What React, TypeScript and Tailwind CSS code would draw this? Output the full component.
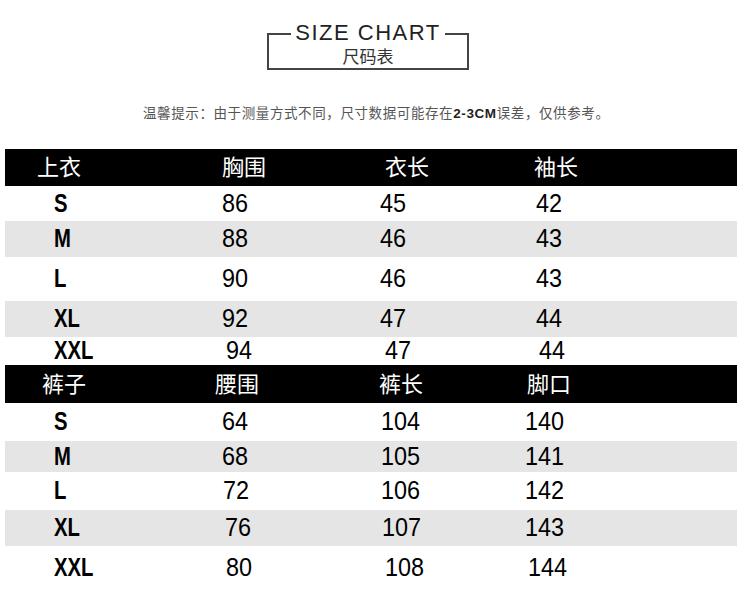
type Row = {
  cells: string[];
  pads: string[];
  h: string;
  bg: string;
};

const cols = ['w-[210px]', 'w-[160px]', 'w-[150px]', 'flex-1'];

const topRows: Row[] = [
  { cells: ['S', '86', '45', '42'], pads: ['pl-[49px]', 'pl-[7px]', 'pl-[5px]', 'pl-[11px]'], h: 'h-[35px]', bg: 'bg-white' },
  { cells: ['M', '88', '46', '43'], pads: ['pl-[49px]', 'pl-[7px]', 'pl-[5px]', 'pl-[11px]'], h: 'h-[36px]', bg: 'bg-[#e5e5e5]' },
  { cells: ['L', '90', '46', '43'], pads: ['pl-[49px]', 'pl-[7px]', 'pl-[5px]', 'pl-[11px]'], h: 'h-[44px]', bg: 'bg-white' },
  { cells: ['XL', '92', '47', '44'], pads: ['pl-[49px]', 'pl-[7px]', 'pl-[5px]', 'pl-[11px]'], h: 'h-[36px]', bg: 'bg-[#e5e5e5]' },
  { cells: ['XXL', '94', '47', '44'], pads: ['pl-[49px]', 'pl-[11px]', 'pl-[10px]', 'pl-[14px]'], h: 'h-[28px]', bg: 'bg-white' },
];

const bottomRows: Row[] = [
  { cells: ['S', '64', '104', '140'], pads: ['pl-[49px]', 'pl-[7px]', 'pl-[6px]', 'pl-0'], h: 'h-[38px]', bg: 'bg-white' },
  { cells: ['M', '68', '105', '141'], pads: ['pl-[49px]', 'pl-[7px]', 'pl-[6px]', 'pl-0'], h: 'h-[31px]', bg: 'bg-[#e5e5e5]' },
  { cells: ['L', '72', '106', '142'], pads: ['pl-[49px]', 'pl-[8px]', 'pl-[6px]', 'pl-0'], h: 'h-[38px]', bg: 'bg-white' },
  { cells: ['XL', '76', '107', '143'], pads: ['pl-[49px]', 'pl-[10px]', 'pl-[7px]', 'pl-0'], h: 'h-[36px]', bg: 'bg-[#e5e5e5]' },
  { cells: ['XXL', '80', '108', '144'], pads: ['pl-[49px]', 'pl-[11px]', 'pl-[10px]', 'pl-[3px]'], h: 'h-[44px]', bg: 'bg-white' },
];

function Header({ cells, pads, h }: { cells: string[]; pads: string[]; h: string }) {
  return (
    <div className={`flex items-center bg-black text-white text-[22px] pb-[5px] ${h}`} style={{ fontFamily: '"Noto Sans CJK SC", sans-serif' }}>
      {cells.map((c, i) => (
        <div key={c} className={`${cols[i]} ${pads[i]} leading-none`}>{c}</div>
      ))}
    </div>
  );
}

function DataRow({ row }: { row: Row }) {
  return (
    <div className={`flex items-center text-black pb-[2px] ${row.h} ${row.bg}`}>
      {row.cells.map((c, i) => (
        <div key={i} className={`${cols[i]} ${row.pads[i]} text-[26px] leading-none`}>
          {i === 0 ? (
            <span className="inline-block font-bold scale-x-[0.78] origin-left">{c}</span>
          ) : (
            <span className="inline-block scale-x-[0.9] origin-left">{c}</span>
          )}
        </div>
      ))}
    </div>
  );
}

export default function App() {
  return (
    <div className="w-[750px] h-[595px] bg-white overflow-hidden pt-[22px]" style={{ fontFamily: '"Liberation Sans", "Noto Sans CJK SC", sans-serif' }}>
      {/* title */}
      <div className="ml-[267px] w-[202px] flex flex-col text-[#333]">
        <div className="flex items-end h-[22px]">
          <div className="w-[24px] h-[11px] border-l-2 border-t-2 border-[#444]" />
          <div className="flex-1 text-center text-[22px] leading-[22px] tracking-[1.5px] self-center text-[#222]">SIZE CHART</div>
          <div className="w-[24px] h-[11px] border-r-2 border-t-2 border-[#444]" />
        </div>
        <div className="h-[26px] border-x-2 border-b-2 border-[#444] text-center text-[17px] leading-[24px]" style={{ fontFamily: '"Noto Sans CJK SC", sans-serif' }}>
          尺码表
        </div>
      </div>

      {/* notice */}
      <div className="mt-[32px] pl-[143px] text-[13.5px] leading-[20px] text-[#555] tracking-[0.6px]" style={{ fontFamily: '"Noto Sans CJK SC", sans-serif' }}>
        温馨提示：由于测量方式不同，尺寸数据可能存在<span className="font-bold text-[#222]" style={{ fontFamily: '"Liberation Sans", sans-serif' }}>2-3CM</span>误差，仅供参考。
      </div>

      {/* tables */}
      <div className="mt-[25px] ml-[5px] w-[732px] flex flex-col">
        <Header cells={['上衣', '胸围', '衣长', '袖长']} pads={['pl-[32px]', 'pl-[7px]', 'pl-[10px]', 'pl-[9px]']} h="h-[37px]" />
        {topRows.map((r) => (
          <DataRow key={'t' + r.cells[0]} row={r} />
        ))}
        <Header cells={['裤子', '腰围', '裤长', '脚口']} pads={['pl-[37px]', 'pl-0', 'pl-[4px]', 'pl-[2px]']} h="h-[38px]" />
        {bottomRows.map((r) => (
          <DataRow key={'b' + r.cells[0]} row={r} />
        ))}
      </div>
    </div>
  );
}
